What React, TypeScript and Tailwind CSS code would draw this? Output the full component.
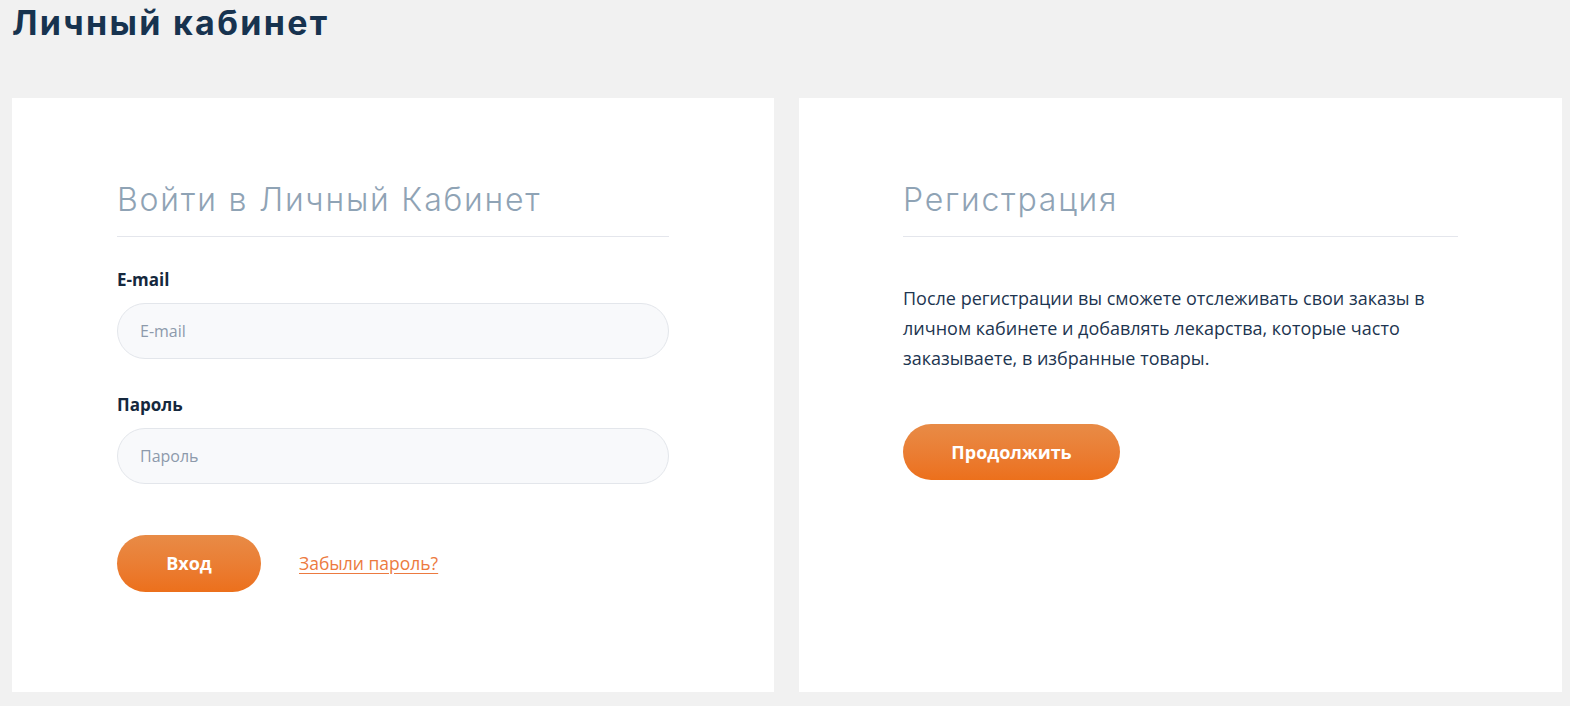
export default function App() {
  return (
    <div className="min-h-[706px] bg-[#f1f1f1] pl-3 pr-2 font-['Open_Sans',sans-serif]">
      <h1 className="pt-[1px] text-[34px] font-bold leading-[44px] tracking-[2.3px] text-[#17334f] font-['Inter',sans-serif]">
        Личный кабинет
      </h1>

      <div className="mt-[53px] grid grid-cols-[762px_763px] gap-[25px]">
        {/* Login */}
        <div className="h-[594px] bg-white px-[105px] pt-[80px]">
          <h2 className="border-b border-[#e4e6ec] pb-[14px] text-[32px] font-light leading-[44px] tracking-[1.8px] text-[#8fa3b5] font-['Inter',sans-serif]">
            Войти в Личный Кабинет
          </h2>

          <label className="mt-[32px] block text-[17px] font-bold leading-[22px] text-[#15283d]">E-mail</label>
          <input
            placeholder="E-mail"
            className="mt-[12px] h-[56px] w-full rounded-full border border-[#e3e6eb] bg-[#f8f9fb] px-[22px] text-[16px] text-[#15283d] outline-none placeholder:text-[#8d9aab]"
          />

          <label className="mt-[35px] block text-[17px] font-bold leading-[22px] text-[#15283d]">Пароль</label>
          <input
            placeholder="Пароль"
            type="password"
            className="mt-[12px] h-[56px] w-full rounded-full border border-[#e3e6eb] bg-[#f8f9fb] px-[22px] text-[16px] text-[#15283d] outline-none placeholder:text-[#8d9aab]"
          />

          <div className="mt-[51px] flex items-center gap-[38px]">
            <button className="h-[57px] w-[144px] rounded-full bg-gradient-to-b from-[#e88b46] to-[#ec701b] text-[18px] font-bold text-white">
              Вход
            </button>
            <a href="#" className="text-[17.5px] text-[#ec7a40] underline underline-offset-[3px]">
              Забыли пароль?
            </a>
          </div>
        </div>

        {/* Registration */}
        <div className="h-[594px] bg-white px-[104px] pt-[80px]">
          <h2 className="border-b border-[#e4e6ec] pb-[14px] text-[32px] font-light leading-[44px] tracking-[1.8px] text-[#8fa3b5] font-['Inter',sans-serif]">
            Регистрация
          </h2>

          <p className="mt-[46px] text-[18px] leading-[30px] text-[#1d3550]">
            После регистрации вы сможете отслеживать свои заказы в личном кабинете и добавлять лекарства, которые часто заказываете, в избранные товары.
          </p>

          <button className="mt-[51px] h-[56px] w-[217px] rounded-full bg-gradient-to-b from-[#e88b46] to-[#ec701b] text-[18px] font-bold text-white">
            Продолжить
          </button>
        </div>
      </div>
    </div>
  );
}
